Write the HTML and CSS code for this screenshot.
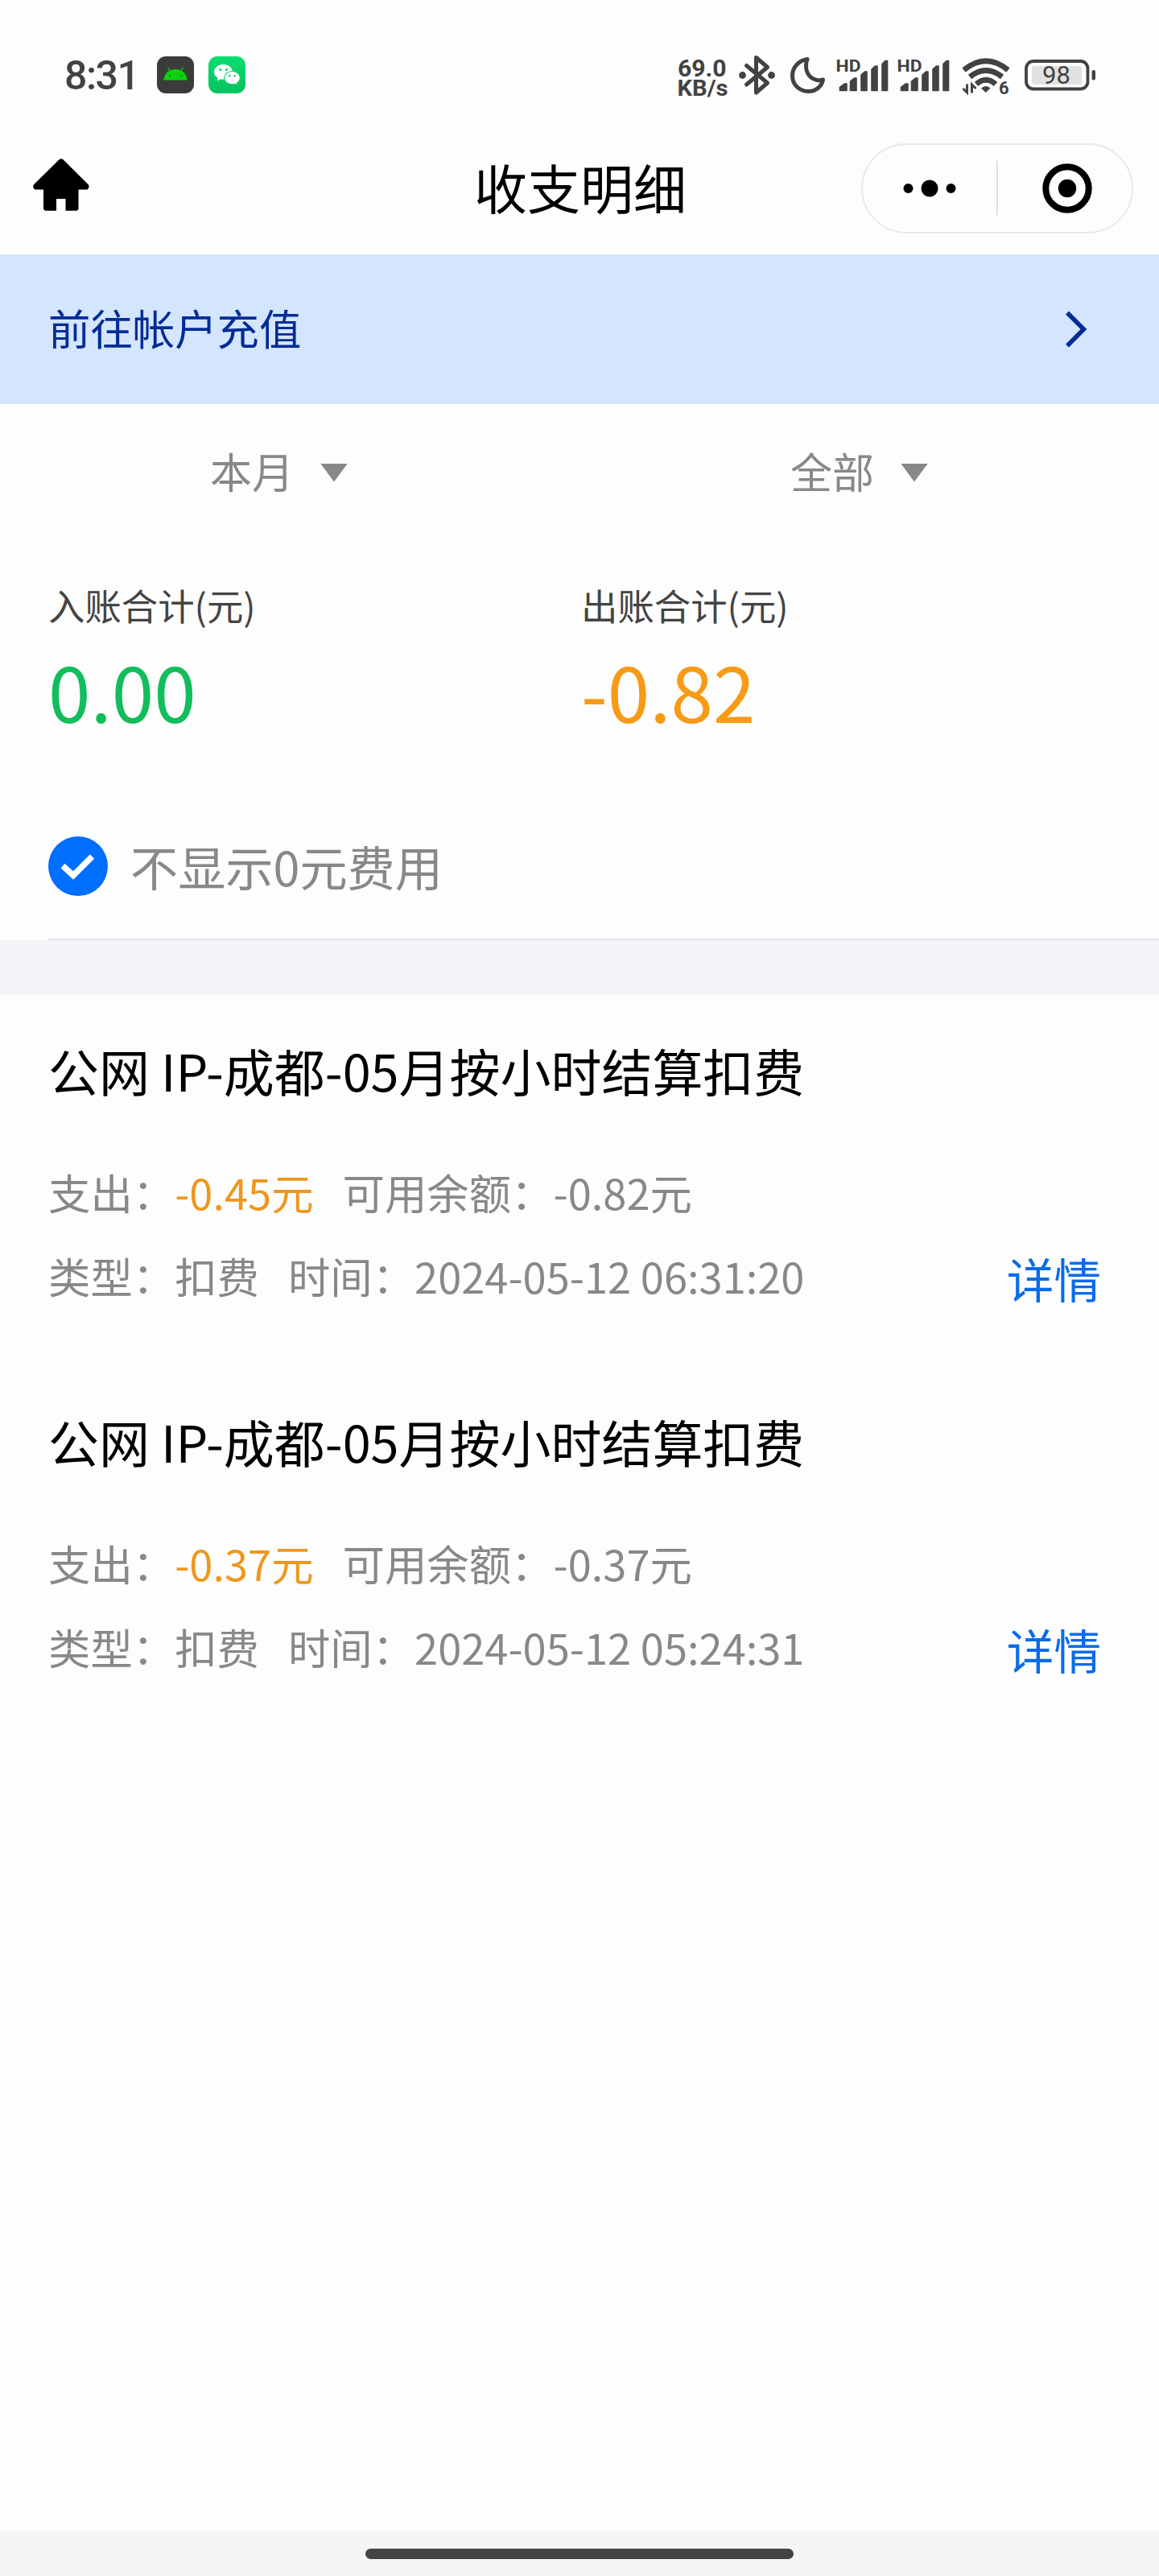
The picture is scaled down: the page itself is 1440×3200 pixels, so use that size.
FILE: index.html
```html
<!DOCTYPE html>
<html lang="zh-CN">
<head>
<meta charset="utf-8">
<title>收支明细</title>
<link rel="stylesheet" href="styles.css">
</head>
<body>
<div class="screen">
  <header class="status">
    <div class="status-left">
      <span class="clock">8:31</span>
      <svg class="app" viewBox="0 0 46 46">
        <rect width="46" height="46" rx="11" fill="#3b3b3b"/>
        <path d="M8.500 29.500C9 21 15 16 23 16S37 21 37.500 29.500Z" fill="#07d40b"/>
        <path d="M13.500 13.500l3 5M32.500 13.500l-3 5" stroke="#07d40b" stroke-width="1.300"/>
        <circle cx="16" cy="24" r="1.100" fill="#2b3b2b"/><circle cx="30" cy="24" r="1.100" fill="#2b3b2b"/>
      </svg>
      <svg class="app" viewBox="0 0 46 46">
        <defs><linearGradient id="wx" x1="0" y1="0" x2="0" y2="1"><stop offset="0" stop-color="#08de70"/><stop offset="1" stop-color="#07c160"/></linearGradient></defs>
        <rect width="46" height="46" rx="11" fill="url(#wx)"/>
        <path d="M18.500 10C12 10 7 14.200 7 19.500c0 3 1.700 5.600 4.200 7.300L11 30.500l4-2.200c1.100.3 2.300.5 3.500.5 6.500 0 11.500-4.200 11.500-9.400S25 10 18.500 10Z" fill="#fff"/>
        <path d="M29.500 18.500c-5.500 0-9.900 3.700-9.900 8.200s4.400 8.200 9.900 8.200c1.200 0 2.400-.2 3.500-.5l3 1.600-.6-2.800c2.400-1.500 3.900-3.800 3.900-6.500 0-4.500-4.300-8.200-9.800-8.200Z" fill="#fff" stroke="#07d067" stroke-width="1.200"/>
        <g fill="#07c764"><circle cx="14.800" cy="16.500" r="1.500"/><circle cx="22.500" cy="16.500" r="1.500"/><circle cx="26.200" cy="24.200" r="1.200"/><circle cx="32.500" cy="24.200" r="1.200"/></g>
      </svg>
    </div>
    <div class="status-right">
      <svg class="speed" viewBox="843 69 61 52">
        <text x="842" y="94.500" textLength="60.500" lengthAdjust="spacingAndGlyphs">69.0</text>
        <text x="841.500" y="119" class="unit" textLength="63" lengthAdjust="spacingAndGlyphs">KB/s</text>
      </svg>
      <svg class="bt" viewBox="918 69 50 48">
        <path d="M927.500 81.500l26 21.500-14 12V71.500l14 12-26 21.500" fill="none" stroke="#424242" stroke-width="5" stroke-linejoin="round" stroke-linecap="round"/>
        <circle cx="922.500" cy="93.500" r="4.400" fill="#424242"/><circle cx="958.500" cy="93.500" r="4.400" fill="#424242"/>
      </svg>
      <svg class="moon" viewBox="982 69 44 48">
        <path d="M1003 73.500C993 75 984.500 83 984.500 94c0 11.500 9 19.500 19.500 19.500 9.500 0 17-6 18.500-14.500-2.500.8-5 1-7.500.5C1003 97 999 85 1003 73.500Z" fill="none" stroke="#424242" stroke-width="5" stroke-linejoin="round"/>
      </svg>
      <svg class="signal" viewBox="1040 69 62 48">
        <text x="1038.500" y="88.500" class="hd" textLength="31" lengthAdjust="spacingAndGlyphs">HD</text>
        <path d="M1043.500 112.500v-4l6-4.500h2.500v8.500ZM1056.500 112.500V101l5-4h2.500v15.500ZM1070 112.500V93l4.500-4h2.500v23.500ZM1083 112.500V86l4.500-4h2.500v30.500ZM1096 112.500V79.500l4-4h2.500v37Z" class="bars"/>
      </svg>
      <svg class="signal" viewBox="1040 69 62 48">
        <text x="1038.500" y="88.500" class="hd" textLength="31" lengthAdjust="spacingAndGlyphs">HD</text>
        <path d="M1043.500 112.500v-4l6-4.500h2.500v8.500ZM1056.500 112.500V101l5-4h2.500v15.500ZM1070 112.500V93l4.500-4h2.500v23.500ZM1083 112.500V86l4.500-4h2.500v30.500ZM1096 112.500V79.500l4-4h2.500v37Z" class="bars"/>
      </svg>
      <svg class="wifi" viewBox="1192 69 67 48">
        <g fill="none" stroke="#424242" stroke-width="6.800">
          <path d="M1197.500 87q27.500-22.500 55 0"/><path d="M1205 95.500q20-16 40 0"/><path d="M1213 104.500q12-10.500 24 0"/>
        </g>
        <path d="M1219 109.500q6-5 11.500 0l-5.700 5.500Z" fill="#424242"/>
        <path d="M1201.500 104.500v10.500l-5-5M1207.500 115.500v-10.500l5 5" fill="none" stroke="#424242" stroke-width="3"/>
        <text x="1241" y="117" class="six">6</text>
      </svg>
      <svg class="battery" viewBox="1273 69 88 48">
        <rect x="1275" y="76" width="76.500" height="34.500" rx="9" fill="#fdfdfd" stroke="#424242" stroke-width="3.800"/>
        <rect x="1282" y="82" width="62" height="23" rx="3" fill="#e2e2e2"/>
        <rect x="1356.500" y="87" width="4.500" height="12.500" rx="2" fill="#424242"/>
        <text x="1312.500" y="104" text-anchor="middle" class="pct">98</text>
      </svg>
    </div>
  </header>

  <nav class="nav">
    <svg class="home" viewBox="41 197 70 65">
      <path d="M73.500 198.300q2.500-2.200 5 0L110 229.500q1.700 3.500-1.500 6H97.500v23q0 3.300-3.500 3.300H81.500V247H70v14.800H57.500q-3.500 0-3.500-3.300v-23H43.500q-3.500-2-1.800-6Z"/>
    </svg>
    <h1 class="title">收支明细</h1>
    <div class="capsule">
      <svg class="dots" viewBox="0 0 66 22"><circle cx="6.500" cy="11" r="6"/><circle cx="33" cy="11" r="10.500"/><circle cx="59.500" cy="11" r="6"/></svg>
      <span class="split"></span>
      <svg class="target" viewBox="0 0 62 62"><circle cx="31" cy="31" r="26.700" fill="none" stroke="#000" stroke-width="8"/><circle cx="31" cy="31" r="11.200"/></svg>
    </div>
  </nav>

  <a class="recharge">
    <span>前往帐户充值</span>
    <svg class="chevron" viewBox="0 0 28 46"><path d="M3 2.500 23.500 23 3 43.500" fill="none" stroke="#022c96" stroke-width="5.500"/></svg>
  </a>

  <div class="filters">
    <div class="filter"><span>本月</span><i class="caret"></i></div>
    <div class="filter"><span>全部</span><i class="caret"></i></div>
  </div>

  <section class="totals">
    <div><p class="total-label">入账合计(元)</p><p class="amount income">0.00</p></div>
    <div><p class="total-label">出账合计(元)</p><p class="amount expense">-0.82</p></div>
  </section>

  <div class="toggle">
    <svg class="check" viewBox="0 0 74 74"><circle cx="37" cy="37" r="37" fill="#006eff"/><path d="M18 36.500 31 48.500 54.500 25" fill="none" stroke="#fff" stroke-width="7.500"/></svg>
    <span>不显示0元费用</span>
  </div>
  <div class="band"></div>

  <main class="records">
    <article class="record">
      <h2 class="record-title">公网 IP-成都-05月按小时结算扣费</h2>
      <p class="row"><span>支出：<b class="cost">-0.45元</b></span><span>可用余额：-0.82元</span></p>
      <p class="row"><span>类型：扣费</span><span>时间：2024-05-12 06:31:20</span><a class="detail">详情</a></p>
    </article>
    <article class="record">
      <h2 class="record-title">公网 IP-成都-05月按小时结算扣费</h2>
      <p class="row"><span>支出：<b class="cost">-0.37元</b></span><span>可用余额：-0.37元</span></p>
      <p class="row"><span>类型：扣费</span><span>时间：2024-05-12 05:24:31</span><a class="detail">详情</a></p>
    </article>
  </main>

  <footer class="gesture"><span class="handle"></span></footer>
</div>
</body>
</html>
```
FILE: styles.css
```css
* { box-sizing: border-box; margin: 0; padding: 0; }

body {
  background: #fdfdfd;
  font-family: "Noto Sans CJK SC", sans-serif;
  color: #888;
}

svg { display: block; flex: none; overflow: visible; }

.screen {
  width: 1440px;
  height: 3200px;
  display: flex;
  flex-direction: column;
  overflow: hidden;
}

/* system status bar */
.status {
  height: 151px;
  padding: 69px 79px 0 80px;
  display: flex;
  justify-content: space-between;
  align-items: flex-start;
}
.status-left, .status-right { height: 48px; display: flex; align-items: flex-start; }
.clock {
  width: 115px;
  padding-top: 1px;
  font: 500 50px/48px Roboto, sans-serif;
  letter-spacing: -1.5px;
  color: #424242;
}
.app { width: 46px; height: 46px; margin: 1px 18px 0 0; }
.status-right { gap: 14px; }
.speed { width: 61px; height: 52px; font: 700 30px Roboto, sans-serif; fill: #424242; }
.unit { font-size: 27.500px; }
.bt { width: 50px; height: 48px; }
.moon { width: 44px; height: 48px; }
.signal { width: 62px; height: 48px; }
.wifi { width: 67px; height: 48px; }
.battery { width: 88px; height: 48px; }
.bars { fill: #424242; stroke: #424242; stroke-width: 1.6; stroke-linejoin: round; }
.hd { font: 700 21px Roboto, sans-serif; fill: #424242; }
.six { font: 700 22px Roboto, sans-serif; fill: #424242; }
.pct { font: 400 31px Roboto, sans-serif; fill: #424242; }

/* title bar */
.nav {
  height: 165px;
  padding: 0 32px;
  display: grid;
  grid-template-columns: 1fr auto 1fr;
  align-items: center;
}
.home { width: 70px; height: 65px; margin: 0 0 8px 9px; }
.title {
  font-size: 66px;
  font-weight: 400;
  line-height: 90px;
  color: #000;
  padding: 0 0 6px 2px;
}
.capsule {
  justify-self: end;
  width: 338px;
  height: 112px;
  border: 2px solid #e9e9e9;
  border-radius: 56px;
  display: flex;
  align-items: center;
  justify-content: space-between;
  padding: 0 49px 0 50px;
}
.dots { width: 66px; height: 22px; }
.split { width: 2px; height: 67px; background: #e0e0e0; margin-right: 5px; }
.target { width: 62px; height: 62px; }

.recharge {
  height: 186px;
  padding: 0 89px 0 60px;
  background: #d4e5fe;
  color: #022c96;
  font-size: 52.400px;
  display: flex;
  align-items: center;
  justify-content: space-between;
}
.recharge span { padding-bottom: 6px; }
.chevron { width: 28px; height: 46px; }

.filters {
  height: 164px;
  display: grid;
  grid-template-columns: 721px 719px;
  font-size: 52px;
}
.filter { display: flex; align-items: center; padding-left: 261px; gap: 33px; }
.filter span { line-height: 76px; padding-top: 1px; }
.caret {
  width: 34px;
  height: 23px;
  margin-top: 6px;
  background: #888;
  clip-path: polygon(0 0, 100% 0, 50% 100%);
}

.totals {
  height: 319px;
  padding: 55px 60px 0;
  display: grid;
  grid-template-columns: 662px 1fr;
}
.total-label { font-size: 45.400px; line-height: 60px; color: #444; }
.amount { margin-top: 21px; font-size: 94.500px; line-height: 110px; }
.income { color: #12bd5c; }
.expense { color: #f79a15; }

.toggle {
  height: 183px;
  margin-left: 60px;
  border-bottom: 2px solid #e3e5e7;
  display: flex;
  align-items: center;
  gap: 28px;
  font-size: 59.200px;
}
.toggle span { line-height: 80px; padding-bottom: 1px; }
.check { width: 74px; height: 74px; }
.band { height: 68px; background: #f2f4f8; }

.records { flex: 1; }
.record { height: 461px; padding: 48px 72px 0 60px; }
.record-title {
  font-size: 62.980px;
  font-weight: 400;
  line-height: 90px;
  color: #000;
  margin-bottom: 54px;
  white-space: nowrap;
}
.row {
  display: flex;
  align-items: center;
  gap: 36px;
  font-size: 52.400px;
  line-height: 104px;
  white-space: nowrap;
}
.cost { font-weight: 400; color: #ee971f; }
.detail { margin-left: auto; padding-top: 8px; line-height: 96px; font-size: 58.600px; color: #0a6bea; }

.gesture {
  height: 56px;
  padding-top: 22px;
  background: #f5f5f5;
  display: flex;
  justify-content: center;
}
.handle { width: 532px; height: 13px; border-radius: 7px; background: #444; }
```
